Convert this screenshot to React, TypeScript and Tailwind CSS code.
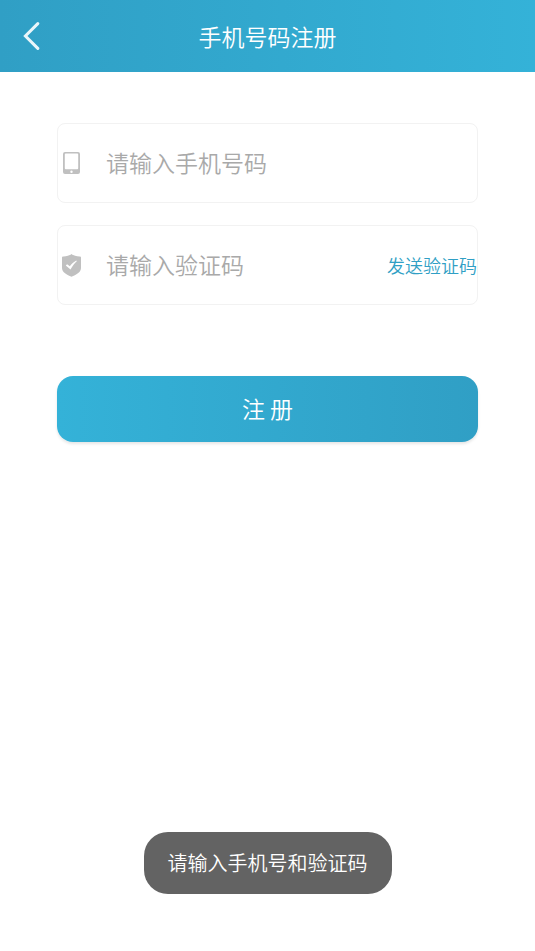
import type { ReactNode } from "react";

function BackIcon() {
  return (
    <svg width="18" height="28" viewBox="0 0 18 28" fill="none" aria-hidden="true">
      <path d="M15.800 1.600 3.400 14l12.400 12.400" stroke="#fff" strokeOpacity="0.9" strokeWidth="3" strokeLinecap="round" strokeLinejoin="miter" />
    </svg>
  );
}

function PhoneIcon() {
  return (
    <svg width="17" height="22" viewBox="0 0 17 22" aria-hidden="true">
      <path
        fill="#c0c0c0"
        fillRule="evenodd"
        d="M2 0h13a2 2 0 0 1 2 2v18a2 2 0 0 1-2 2H2a2 2 0 0 1-2-2V2a2 2 0 0 1 2-2ZM2.800 1.600a1 1 0 0 0-1 1v13.600a1 1 0 0 0 1 1h11.400a1 1 0 0 0 1-1V2.600a1 1 0 0 0-1-1ZM8.500 18.600a1.200 1.200 0 1 0 0 2.400a1.200 1.200 0 1 0 0-2.400Z"
      />
    </svg>
  );
}

function ShieldIcon() {
  return (
    <svg width="19" height="23" viewBox="0 0 19 23" aria-hidden="true">
      <path
        fill="#c0c0c0"
        d="M9.500 0C7.500 1.600 4 2.500 1 2.400Q0 2.400 0 3.400V14c0 4.200 5 7 9.500 8.700C14 21 19 18.200 19 14V3.400q0-1-1-1C15 2.500 11.500 1.600 9.500 0Z"
      />
      <path d="m3.800 11.400 1.300-1.100 2.700 2c1.800-2.400 3.900-4.400 6.500-5.800l.5.700c-2.500 2.300-4.500 4.900-6.300 8.400Z" fill="#fff" />
    </svg>
  );
}

type FieldProps = {
  id: string;
  label: string;
  type: string;
  icon: ReactNode;
  children?: ReactNode;
};

function Field({ id, label, type, icon, children }: FieldProps) {
  return (
    <div className="flex h-20 items-center rounded-lg border border-[#f2f2f2]">
      <label htmlFor={id} aria-label={label} className="flex w-[26px] shrink-0 justify-center">
        {icon}
      </label>
      <input
        id={id}
        type={type}
        placeholder={label}
        className="ml-[22px] h-full min-w-0 flex-1 bg-transparent pb-0.5 text-[23px] font-[350] text-[#333] outline-none placeholder:text-[#a9a9a9]"
      />
      {children}
    </div>
  );
}

export default function App() {
  return (
    <div className="min-h-screen bg-white font-['Noto_Sans_CJK_SC',sans-serif] font-[350]">
      <header className="grid h-[72px] grid-cols-[64px_1fr_64px] items-center bg-linear-to-r from-[#309fc5] to-[#34b2d8] text-white">
        <button type="button" aria-label="返回" className="flex h-full items-center pl-[22px]">
          <BackIcon />
        </button>
        <h1 className="text-center text-[23px] font-[350]">手机号码注册</h1>
      </header>

      <main className="px-[57px] pt-[51px]">
        <form className="flex flex-col" onSubmit={(e) => e.preventDefault()}>
          <div className="flex flex-col gap-[22px]">
            <Field id="phone" label="请输入手机号码" type="tel" icon={<PhoneIcon />} />
            <Field id="code" label="请输入验证码" type="text" icon={<ShieldIcon />}>
              <button type="button" className="shrink-0 text-lg text-[#309fc5]">
                发送验证码
              </button>
            </Field>
          </div>
          <button
            type="submit"
            className="mt-[71px] h-[66px] rounded-2xl bg-linear-to-r from-[#34b2d8] to-[#309fc5] pb-0.5 text-[23px] text-white shadow-[0_2px_3px_rgba(0,0,0,0.1)]"
          >
            注 册
          </button>
        </form>
      </main>

      <div className="pointer-events-none fixed inset-x-0 bottom-[57px] flex justify-center">
        <div role="status" className="rounded-3xl bg-[#636363] px-6 py-4 text-xl leading-[30px] text-white">
          请输入手机号和验证码
        </div>
      </div>
    </div>
  );
}
